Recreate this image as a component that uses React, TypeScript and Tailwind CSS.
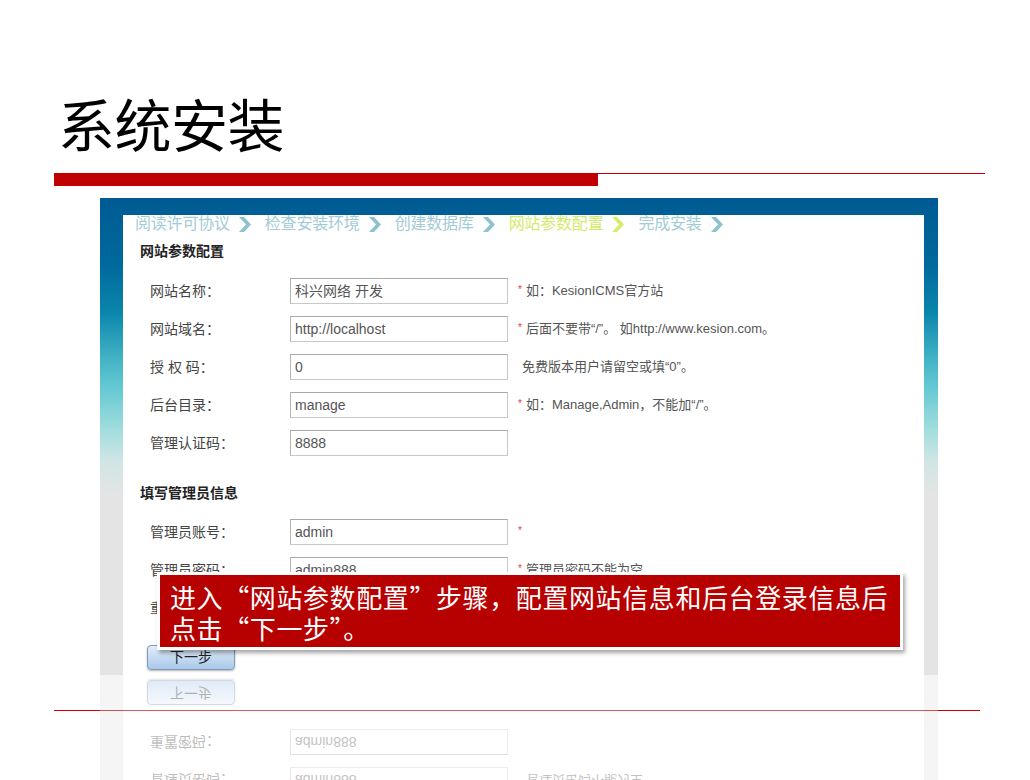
import React from 'react';

const FONT = '"Liberation Sans", "Noto Sans CJK SC", sans-serif';
const CJK = '"Noto Sans CJK SC", "Liberation Sans", sans-serif';

interface FieldRow {
    label: string;
    value: string;
    required?: boolean;
    hint?: string;
}

const siteRows: FieldRow[] = [
    { label: '网站名称：', value: '科兴网络 开发', required: true, hint: '如：KesionICMS官方站' },
    { label: '网站域名：', value: 'http://localhost', required: true, hint: '后面不要带“/”。 如http://www.kesion.com。' },
    { label: '授 权 码：', value: '0', hint: '免费版本用户请留空或填“0”。' },
    { label: '后台目录：', value: 'manage', required: true, hint: '如：Manage,Admin，不能加“/”。' },
    { label: '管理认证码：', value: '8888' },
];

const adminRows: FieldRow[] = [
    { label: '管理员账号：', value: 'admin', required: true },
    { label: '管理员密码：', value: 'admin888', required: true, hint: '管理员密码不能为空' },
    { label: '重置密码：', value: 'admin888' },
];

const steps = ['阅读许可协议', '检查安装环境', '创建数据库', '网站参数配置', '完成安装'];

const Chevron: React.FC<{ color: string }> = ({ color }) => (
    <svg width="12" height="15" viewBox="0 0 12 15" className="shrink-0 ml-[9px] mr-[14px]">
        <polygon points="0,0 5,0 12,7.5 5,15 0,15 7,7.5" fill={color} />
    </svg>
);

const Row: React.FC<{ row: FieldRow }> = ({ row }) => (
    <div className="flex items-center h-[38px] pl-[27px]">
        <div className="w-[140px] text-[14px] text-[#444]">{row.label}</div>
        <div className="w-[218px] h-[26px] flex items-center pl-[4px] border border-[#c9c9c9] border-t-[#a9a9a9] border-l-[#b4b4b4] text-[14px] text-[#555]">
            {row.value}
        </div>
        {row.required && <span className="ml-[10px] text-[10px] text-[#e23b3b] -mt-[4px]">*</span>}
        {row.hint && (
            <span className={`${row.required ? 'ml-[4px]' : 'ml-[14px]'} text-[13px] text-[#555]`}>{row.hint}</span>
        )}
    </div>
);

const Screenshot: React.FC = () => (
    <div
        className="w-[838px] h-[477px] pt-[17px] pl-[23px] pr-[14px] flex"
        style={{
            background:
                'linear-gradient(to bottom, #005a93 0%, #00699c 14%, #0b86ac 24%, #3fb0c4 33%, #66c9d3 40%, #9ddcdc 48%, #cfe5e5 55%, #e4e4e4 62%, #e4e4e4 100%)',
        }}
    >
        <div className="flex-1 bg-white overflow-hidden" style={{ fontFamily: FONT }}>
            <div className="h-[22px] -mt-[2px] pl-[12px] flex items-center text-[16px] tracking-[-0.2px]">
                {steps.map((s, i) => {
                    const current = i === 3;
                    return (
                        <React.Fragment key={s}>
                            <span className={current ? 'text-[#d3ea6c]' : 'text-[#a3cbd6]'}>{s}</span>
                            <Chevron color={current ? '#d6ec6a' : '#8ec2ce'} />
                        </React.Fragment>
                    );
                })}
            </div>
            <div className="h-[30px] mt-[1px] flex items-center pl-[17px] text-[14px] font-bold text-[#222]">网站参数配置</div>
            <div className="mt-[6px]">
                {siteRows.map((r) => (
                    <Row key={r.label} row={r} />
                ))}
            </div>
            <div className="mt-[16px] h-[30px] flex items-center pl-[17px] text-[14px] font-bold text-[#222]">填写管理员信息</div>
            <div className="mt-[5px]">
                {adminRows.map((r) => (
                    <Row key={r.label} row={r} />
                ))}
            </div>
            <div className="mt-[18px] pl-[24px]">
                <div className="w-[88px] h-[25px] rounded-[4px] border border-[#7d9bbd] bg-gradient-to-b from-[#e4eef9] to-[#a9c8ea] shadow-[0_1px_2px_rgba(0,0,0,0.3)] flex items-center justify-center text-[14px] text-[#222]">
                    下一步
                </div>
            </div>
        </div>
    </div>
);

export default function App() {
    return (
        <div className="relative w-[1030px] h-[780px] overflow-hidden bg-white" style={{ fontFamily: CJK }}>
            <div className="pt-[94px] pl-[58px] text-[57px] leading-none text-black tracking-[-0.5px]">系统安装</div>

            <div className="mt-[22px] ml-[54px] w-[931px] flex items-start">
                <div className="w-[544px] h-[13px] bg-[#c00000]" />
                <div className="flex-1 h-px bg-[#c00000]" />
            </div>

            <div className="mt-[12px] ml-[100px]">
                <Screenshot />
            </div>

            {/* footer rule, sits under the reflection */}
            <div className="absolute left-[54px] top-[710px] w-[926px] h-px bg-[#cc0000]" />

            <div className="relative z-10 ml-[100px] h-[105px] overflow-hidden opacity-[0.35]">
                <div className="[transform:scaleY(-1)]">
                    <Screenshot />
                </div>
            </div>

            <div className="absolute z-20 left-[157px] top-[572px] border-[3px] border-white shadow-[2px_3px_4px_rgba(0,0,0,0.35)]">
                <div className="w-[740px] h-[72px] bg-[#b70000] pl-[10px] pt-[6px] text-white text-[26px] leading-[31px] tracking-[0.6px]">
                    <div>进入“网站参数配置”步骤，配置网站信息和后台登录信息后</div>
                    <div>点击“下一步”。</div>
                </div>
            </div>
        </div>
    );
}
